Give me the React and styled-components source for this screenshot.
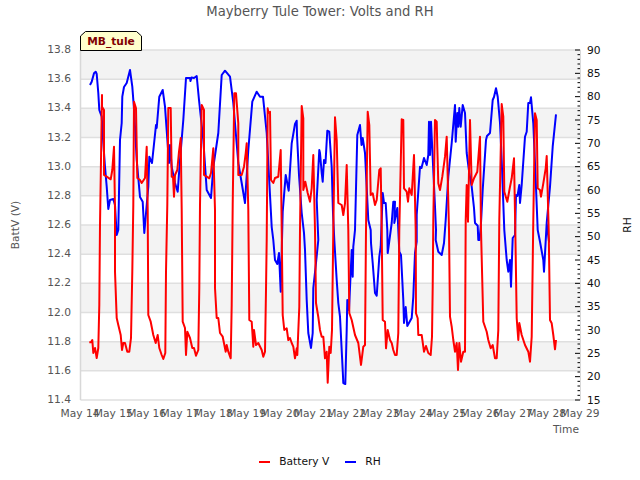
import React from "react";
import styled, { createGlobalStyle } from "styled-components";

const Global = createGlobalStyle`
  html, body { margin: 0; padding: 0; background: #fff; }
  body { font-family: "DejaVu Sans", sans-serif; }
`;

const Page = styled.div`
  width: 640px;
  height: 480px;
  display: flex;
  flex-direction: column;
  overflow: hidden;
`;
const Title = styled.h1`
  margin: 0;
  height: 22px;
  line-height: 23px;
  text-align: center;
  font-size: 13.2px;
  font-weight: 400;
  color: #555;
`;
const ChartWrap = styled.div`
  position: relative;
  height: 428px;
`;
const ChartSvg = styled.svg`
  display: block;
  width: 640px;
  height: 428px;
`;
const Badge = styled.div`
  position: absolute;
  left: 80px;
  top: 9px;
  width: 62px;
  height: 20px;
  display: flex;
  align-items: center;
  justify-content: center;
  font-size: 10.67px;
  font-weight: 700;
  color: #800000;
`;
const BadgeShape = styled.svg`
  position: absolute;
  inset: 0;
  width: 62px;
  height: 20px;
`;
const BadgeText = styled.span`
  position: relative;
`;
const Legend = styled.div`
  height: 22px;
  display: flex;
  align-items: center;
  justify-content: center;
  font-size: 10.67px;
  color: #111;
`;
const LegendItem = styled.div`
  display: flex;
  align-items: center;
  gap: 9px;
  margin-right: ${(p) => p.$gap}px;
`;
const Swatch = styled.span`
  display: block;
  width: 11px;
  height: 2px;
  margin-top: 2px;
  background: ${(p) => p.$color};
`;
const TickText = styled.text`
  font-family: "DejaVu Sans", sans-serif;
  font-size: 10.67px;
  fill: ${(p) => p.$color || "#555"};
`;

const L = 80.5, R = 580.5, T = 50, B = 400;
const yVals = ["13.8","13.6","13.4","13.2","13.0","12.8","12.6","12.4","12.2","12.0","11.8","11.6","11.4"];
const yPos = (i) => T + (i * (B - T)) / 12;
const rhPos = (v) => B - ((v - 15) * (B - T)) / 75;
const days = Array.from({ length: 16 }, (_, i) => 14 + i);

const blue = `90,85 91.7,81.7 94,73.3 95.7,71.7 96.7,74 98.3,93 99.3,110 101.7,116.7 103.3,143 105,166.7 106.7,186.7 108.3,209 110,200 113.3,199 115,205 116.7,235 118.3,230 120,140 121.7,123 122.3,96.7 124,87 126.7,83 130,70 132.3,86.7 134.3,113 136.7,160 140,197 142.7,201.7 144.3,233 148.3,186.7 149.3,156.7 152,163 156,125 156.7,128 159.3,96.7 162.7,90 165,106.7 168.3,153 169,163 170,145 171.7,167 175,183 177.7,191.7 180,160 183.3,120 186,78 190,78 190.5,81 191.5,77.5 194,78 196.7,76 199,100 203.3,140 206.7,190 211,198 213.3,167 218.3,133 221.7,75 225,70.7 230,76.7 233.3,103 238.3,163 241.7,183 245,203 248.3,150 252.3,101.7 256.7,91.7 260,96.7 263,96.7 266.7,133 271.7,227 273.3,240 275,260 277.3,264 279,253 280.7,291.7 282.7,211.7 285.7,175 288.7,190.7 291.7,143.3 295,124 296.7,120.7 297,135 299,175 301.7,213 304,233 305,250 306.7,300 308.3,333 311,348 312.7,333 313.3,288 316,263 318.3,240 316.7,200 319.3,150 320,153 321.7,173 322.7,181.7 324,160 325.5,163 327.3,130.7 329.3,131.7 331.7,167 333,213 334.3,240 336.7,280 338.3,303 340,316.7 342.7,370 343.3,383 345.3,384 346.7,330 347.3,300 349,310 351.7,250 352.7,276.7 353.3,246.7 355,230 357.3,135 360,125 361.5,145 362.7,138 365,153 368.3,220 370.7,230 371,243 372.7,263 375,293 376.7,295.7 379.3,256.7 380.7,246.7 382.7,193 384,203 385.7,203 387.3,230 387.7,253 391.7,223 393.3,201.7 395,201.7 394.3,223 397.3,208 399.3,251.7 401,255 403.3,300 404,323 405.7,307 407.3,326 411.7,318 413.3,296.7 415,253 416.7,241.7 416.7,215 420,166.7 421.5,168 424,158 426.7,165 428.3,155 429,121.7 430,155 431,121.7 435,206.7 436,230 435.7,240 438.3,251.7 441.7,255 444,243 445.7,220 448.3,176.7 451.7,143 455,105 455.7,141.7 457.3,113 458.3,126.7 459.3,108 460.7,126.7 462.7,105 465,113 466.7,153 469.3,173 471.7,186.7 474,208 475,223 477.7,225.7 478.3,240 479.5,240 481,223 482.7,190 486,140 487,136 490,133 492.7,100 494,97 496,88.3 497.7,96.7 500,123 501.7,160 504.3,230 506.7,260 508.3,271.7 510,260 511,286.7 512.7,238 515,235 516,195 517.5,196 519.3,185 520,203 521.7,185 525,136.7 526.7,131.7 528.3,103 530,103 531,97.3 533.3,123.3 535.7,180 537.7,230 540,241.7 543.3,260 544,271.7 546.7,223 549,241.7 546.7,223 550,186.7 552.7,146.7 556,114.3`;

const red = `89.3,342.3 91,342.3 92.3,340 93.3,353 95,348 96.7,358 98.3,348 99.3,305 100,225 102,95 102,106.7 104,110 104,175 106.7,176.7 110.7,179.3 112.3,170 114,146.7 115,210 115,271.7 116.7,318 118.3,325 120.7,335 122,350 123.3,343 125,343 127.3,351.7 129.3,351.7 131,338 132.3,271.7 133.3,205 134,101.7 136,108.3 137.3,178 140,180 141.7,183 145,178 146.7,146.7 147.7,210 148.3,315 150.7,321.7 153.3,335 155.7,343 157.7,335 159.3,348 161.7,355 163.3,359 165.3,353 166,271.7 167.3,205 168.3,108 170.7,108 171.7,176.7 173,176.7 174,196.7 175,175 177.3,170 179,151.7 180.7,138 181.7,210 182.7,321.7 185,328 186,355 187.3,331.7 190,338 192.3,348 194,348 196,355.7 198.3,350 199.3,288 200,205 201.7,105 204,110 204,175 206.7,176.7 209.3,178.3 211,173 213.3,148.3 215,210 215,288 216.7,318 218.3,318 220,333 222.7,336.7 225.7,351.7 226.7,345 228.3,351.7 230.7,358.3 231.7,305 232.7,205 234.3,93.3 236,93.3 238.3,123.3 238.3,175 241.7,175 244,166.7 245.7,153.3 246.7,143.3 248.3,210 249.3,320 251.7,321.7 253.3,346.7 254,330 256,345 258.3,343 261.7,350 263.3,356.7 265,351.7 266,290 266.7,240 267.7,108.3 268.3,113 270,111.7 271,180 273.3,183 275,178 278.3,176.7 280.7,150 281.7,230 282.7,315 284.3,330 286.7,328.3 288.3,340 290,338 291.7,343 293.3,346.7 295,358.3 296.7,348.3 297.3,355 299.3,306.7 300,230 301.7,106 303.3,118.3 303.3,190 305.3,181.7 307.7,193 310,201.7 311.7,188 313.3,155 315,230 316,303 318.3,317 320,330 321.7,336.7 323.3,336.7 325,358.3 326.7,351.7 327.7,382.7 329.3,346.7 330.7,353 332,330 333.3,230 335,117.3 336.7,140 338.3,203 341.7,205 343.3,215 345,203.3 346.7,165 348.3,230 349.3,313 351.7,320 355,335 358.3,343 361,365 363.3,346.7 365,345 366,230 367.7,111.7 369.3,125 370.7,195 372.7,193.3 375,205 376.7,200 379.3,170 380.7,168.3 381.7,230 382.7,320 385,321.7 386,348.3 387.7,330 390,340 391.7,343 393.3,350 395,355 396.7,355 398.3,333 399.3,230 401.7,119.3 403.3,120 404,188.3 406.7,191.7 408,201.7 409.3,188.3 411.7,195 412.7,178 414,155 415.7,230 416,313.3 417.7,318.3 418.3,335 421.7,335 424,351.7 426,346 428.3,353 430.7,355 432,336.7 432.7,286.7 433.3,220 435,120 436.7,121.7 437.3,146.7 438.3,183.3 440,190 442.3,176.7 445,156.7 446.7,136.7 449,230 450,316.7 451.7,326.7 453.3,340 455,351.7 456.7,343 458,370 459.3,343 461,361.7 463.3,351.7 465,351.7 465.7,220 466.7,185 468,221.7 470,120 471.7,185 474,178.3 477.3,171.7 480,136.7 481,230 483.3,321.7 486.7,331.7 488.3,340 490.7,348.3 492.7,345 495,358.3 496.7,358.3 498.3,330 499.3,220 501.7,104 503.3,116.7 504.3,191.7 507.3,201.7 510,186.7 511.7,178.3 514,158.3 515.3,230 516.7,318.3 518.3,340 519.3,323 521.7,335 525,345 528.3,351.7 530,361.7 531.7,336.7 533.3,220 535,113.3 536.7,120 537.7,188.3 540,190 541,196.7 543.3,183.3 545.7,168.3 546.7,156 548.7,230 550,320 551.7,323.3 553.3,335 555,349.3 556,340`;

function Plot() {
  const top = 22;
  return (
    <ChartSvg viewBox={`0 ${top} 640 428`}>
      {yVals.map((_, i) =>
        i < 12 && i % 2 === 0 ? (
          <rect key={i} x={L} y={yPos(i)} width={R - L} height={yPos(i + 1) - yPos(i)} fill="#f3f3f3" />
        ) : null
      )}
      {yVals.map((_, i) => (
        <line key={i} x1={L} x2={R} y1={yPos(i)} y2={yPos(i)} stroke="#dfdfdf" strokeWidth="1.5" />
      ))}
      <line x1={L} x2={L} y1={T} y2={B} stroke="#d8d8d8" strokeWidth="1.5" />
      <line x1={R} x2={R} y1={T} y2={B} stroke="#d8d8d8" strokeWidth="1" />
      <polyline points={blue} fill="none" stroke="#0000ff" strokeWidth="2" strokeLinejoin="round" />
      <polyline points={red} fill="none" stroke="#ff0000" strokeWidth="2" strokeLinejoin="round" />
      {Array.from({ length: 76 }, (_, i) => 15 + i).map((v) => (
        <line
          key={v}
          x1={v % 5 === 0 ? 575 : 577.5}
          x2={580}
          y1={rhPos(v)}
          y2={rhPos(v)}
          stroke="#000"
          strokeWidth="1"
        />
      ))}
      {yVals.map((v, i) => (
        <TickText key={v} x={71} y={yPos(i) + 3} textAnchor="end">{v}</TickText>
      ))}
      {Array.from({ length: 16 }, (_, i) => 15 + i * 5).map((v) => (
        <TickText key={v} x={587} y={rhPos(v) + 3.5} $color="#111">{v}</TickText>
      ))}
      {days.map((d, i) => (
        <TickText key={d} x={80 + i * 33.33} y={417} textAnchor="middle">May {d}</TickText>
      ))}
      <TickText x={579} y={433} textAnchor="end">Time</TickText>
      <TickText transform="translate(19,225) rotate(-90)" textAnchor="middle">BattV (V)</TickText>
      <TickText transform="translate(631,225) rotate(-90)" textAnchor="middle" $color="#111">RH</TickText>
    </ChartSvg>
  );
}

export default function App() {
  return (
    <Page>
      <Global />
      <Title>Mayberry Tule Tower: Volts and RH</Title>
      <ChartWrap>
        <Plot />
        <Badge>
          <BadgeShape viewBox="0 0 62 20">
            <polygon points="0.5,19.5 0.5,5 5.5,0.5 56.5,0.5 61.5,5 61.5,19.5" fill="#ffffcc" stroke="#000" strokeWidth="1" />
          </BadgeShape>
          <BadgeText>MB_tule</BadgeText>
        </Badge>
      </ChartWrap>
      <Legend>
        <LegendItem $gap={16}>
          <Swatch $color="#ff0000" />
          Battery V
        </LegendItem>
        <LegendItem $gap={0}>
          <Swatch $color="#0000ff" />
          RH
        </LegendItem>
      </Legend>
    </Page>
  );
}
